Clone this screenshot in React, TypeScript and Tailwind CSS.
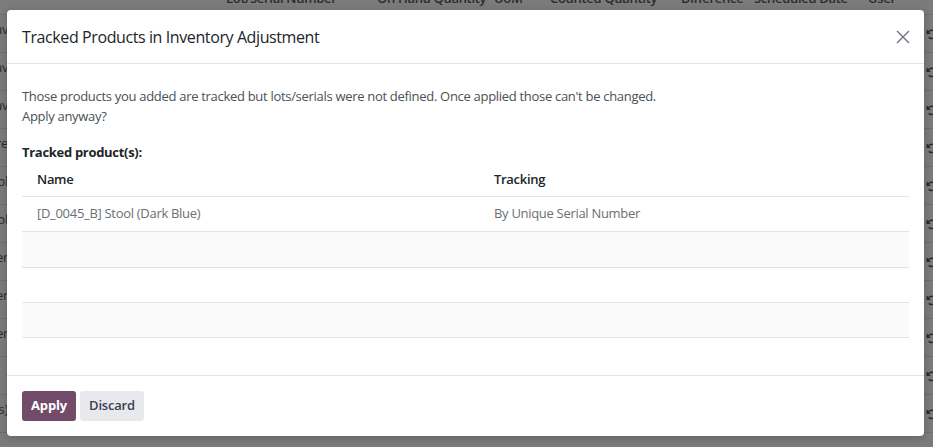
import React from "react";

const bgCols = [
  { w: "w-[226px]", label: "" },
  { w: "w-[151px]", label: "Lot/Serial Number" },
  { w: "w-[117px]", label: "On Hand Quantity" },
  { w: "w-[56px]", label: "UoM" },
  { w: "w-[131px]", label: "Counted Quantity" },
  { w: "w-[73px]", label: "Difference" },
  { w: "w-[114px]", label: "Scheduled Date" },
  { w: "w-[65px]", label: "User" },
];

const leftTexts = ["av", "av", "av", "re", "bl", "bl", "er", "er", "er", "", "s)"];

function UndoIcon() {
  return (
    <svg width="12" height="12" viewBox="0 0 16 16" fill="none" stroke="#2a2a2a" strokeWidth="2">
      <path d="M3 3v4h4" />
      <path d="M3.5 7A5.5 5.5 0 1 1 5 12.5" />
    </svg>
  );
}

export default function App() {
  return (
    <div
      className="relative w-[933px] h-[447px] overflow-hidden bg-[#7b7b7b] text-[#2b2b2b]"
      style={{ fontFamily: '"Open Sans", "Noto Sans", Arial, sans-serif' }}
    >
      {/* dimmed page behind the dialog */}
      <div className="-mt-[23px] flex flex-col text-[13px] tracking-[-0.3px]">
        <div className="flex h-[38px] items-center border-b border-[#6e6e6e] pt-[7px] font-semibold">
          {bgCols.map((c, i) => (
            <div key={i} className={`${c.w} shrink-0 overflow-hidden whitespace-nowrap`}>
              {c.label}
            </div>
          ))}
        </div>
        {leftTexts.map((t, i) => (
          <div key={i} className="flex h-[38px] items-center justify-between border-b border-[#6e6e6e] pb-[8px]">
            <div className="-ml-[5px] w-[13px] overflow-hidden whitespace-nowrap text-right">{t}</div>
            <div className="mr-[-4px] flex items-center pt-[8px]">
              <UndoIcon />
            </div>
          </div>
        ))}
      </div>

      {/* dialog */}
      <div className="absolute left-[7px] top-[10px] flex h-[426px] w-[917px] flex-col rounded-[4px] bg-white shadow-[0_2px_8px_rgba(0,0,0,0.2)]">
        <div className="flex h-[54px] shrink-0 items-center justify-between border-b border-[#e1e4e8] pl-[15px] pr-[14px]">
          <h4 className="pt-[1px] text-[16px] tracking-[-0.4px] text-[#212529]">Tracked Products in Inventory Adjustment</h4>
          <svg width="14" height="14" viewBox="0 0 14 14" stroke="#6c757d" strokeWidth="1.4" fill="none">
            <path d="M1 1L13 13M13 1L1 13" />
          </svg>
        </div>

        <div className="flex flex-1 flex-col px-[15px] pt-[22px] text-[13px] tracking-[-0.3px] text-[#495057]">
          <p className="leading-[20px]">
            Those products you added are tracked but lots/serials were not defined. Once applied those can't be changed.
            <br />
            Apply anyway?
          </p>
          <div className="mt-[16px] font-bold leading-[20px] text-[#212529]">Tracked product(s):</div>
          <div className="w-[887px]">
            <div className="flex h-[35px] items-center border-b border-[#e1e4e8] pt-[1px] font-semibold text-[#212529]">
              <div className="w-[472px] pl-[15px]">Name</div>
              <div>Tracking</div>
            </div>
            <div className="flex h-[35px] items-center border-b border-[#e1e4e8] text-[#6b6f74]">
              <div className="w-[472px] pl-[15px]">[D_0045_B] Stool (Dark Blue)</div>
              <div>By Unique Serial Number</div>
            </div>
            <div className="h-[36px] border-b border-[#e1e4e8] bg-[#fafafa]" />
            <div className="h-[35px] border-b border-[#e1e4e8] bg-white" />
            <div className="h-[35px] border-b border-[#e1e4e8] bg-[#fafafa]" />
          </div>
        </div>

        <div className="flex h-[61px] shrink-0 items-center gap-[4px] border-t border-[#e1e4e8] px-[15px] text-[13px] tracking-[-0.2px]">
          <button className="h-[30px] w-[54px] rounded-[3px] bg-[#714b67] font-bold text-white">Apply</button>
          <button className="h-[30px] w-[64px] rounded-[3px] bg-[#e7e9ed] font-semibold text-[#374151]">Discard</button>
        </div>
      </div>
    </div>
  );
}
